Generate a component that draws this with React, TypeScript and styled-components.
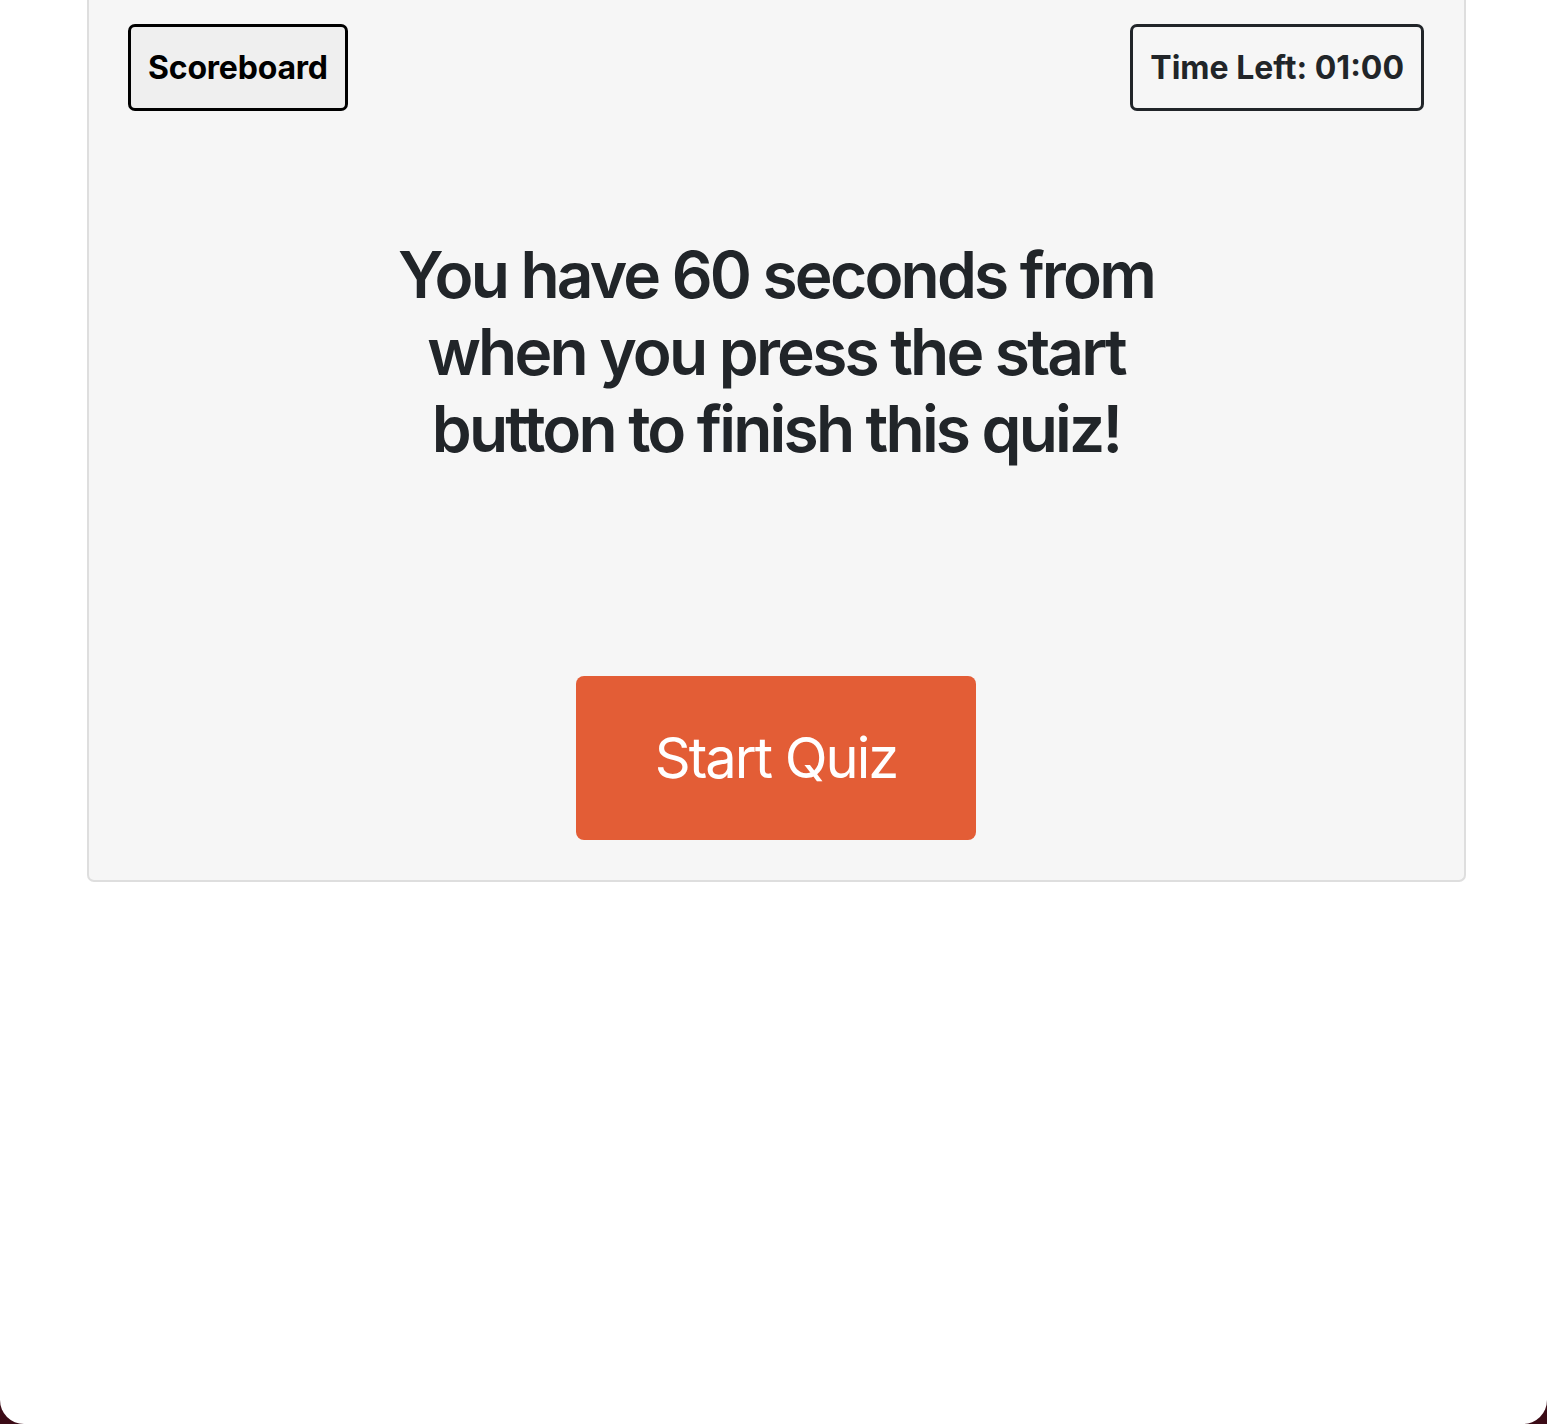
import React from "react";
import styled, { createGlobalStyle } from "styled-components";

const GlobalStyle = createGlobalStyle`
  html, body {
    margin: 0;
    padding: 0;
    background: #3b0b16;
  }
  body {
    font-family: Inter, "Noto Sans", "Liberation Sans", sans-serif;
  }
`;

const Page = styled.div`
  width: 1547px;
  height: 1424px;
  background: #ffffff;
  border-radius: 0 0 24px 24px;
  overflow: hidden;
`;

const Card = styled.section`
  box-sizing: border-box;
  margin-left: 87px;
  width: 1379px;
  height: 882px;
  background: #f6f6f6;
  border: 2px solid #dedede;
  border-top: none;
  border-radius: 0 0 7px 7px;
  padding: 24px 40px 40px 39px;
  display: flex;
  flex-direction: column;
  align-items: center;
`;

const TopBar = styled.header`
  width: 100%;
  display: flex;
  justify-content: space-between;
  align-items: flex-start;
`;

const OutlineBox = styled.button<{ $dark?: boolean }>`
  box-sizing: border-box;
  height: 87px;
  padding: 0 17px;
  border: 3px solid ${(p) => (p.$dark ? "#000000" : "#212529")};
  border-radius: 7px;
  background: ${(p) => (p.$dark ? "#efefef" : "transparent")};
  color: ${(p) => (p.$dark ? "#000000" : "#212529")};
  font-family: Inter, "Noto Sans", sans-serif;
  font-size: 32px;
  font-weight: 700;
  letter-spacing: ${(p) => (p.$dark ? "-0.2px" : "0")};
  display: flex;
  align-items: center;
`;

const Heading = styled.h1`
  margin: 125px 0 0;
  max-width: 820px;
  text-align: center;
  font-family: Inter, "Noto Sans", sans-serif;
  font-size: 64px;
  line-height: 77px;
  font-weight: 600;
  letter-spacing: -2.8px;
  color: #212529;
`;

const StartButton = styled.button`
  margin-top: auto;
  width: 400px;
  height: 164px;
  border: none;
  border-radius: 8px;
  background: #e35d36;
  color: #ffffff;
  font-family: Inter, "Noto Sans", sans-serif;
  font-size: 56px;
  font-weight: 400;
  letter-spacing: -2px;
`;

export default function App() {
  return (
    <>
      <GlobalStyle />
      <Page>
        <Card>
          <TopBar>
            <OutlineBox $dark>Scoreboard</OutlineBox>
            <OutlineBox>Time Left: 01:00</OutlineBox>
          </TopBar>
          <Heading>You have 60 seconds from when you press the start button to finish this quiz!</Heading>
          <StartButton>Start Quiz</StartButton>
        </Card>
      </Page>
    </>
  );
}
